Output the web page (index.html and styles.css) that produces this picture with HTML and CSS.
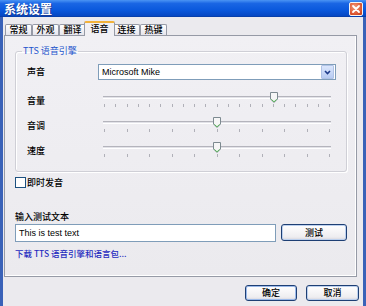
FILE: index.html
```html
<!DOCTYPE html>
<html>
<head>
<meta charset="utf-8">
<link rel="stylesheet" href="styles.css">
</head>
<body>
<div class="window">
  <div class="titlebar">
    <span class="title">系统设置</span>
    <span class="close"><svg width="12" height="12" viewBox="0 0 12 12"><path d="M3 3 L9 9 M9 3 L3 9" stroke="#fff" stroke-width="1.8" stroke-linecap="round"/></svg></span>
  </div>
  <div class="client">
    <div class="tabs">
      <div class="tab">常规</div>
      <div class="tab">外观</div>
      <div class="tab">翻译</div>
      <div class="tab active">语音</div>
      <div class="tab">连接</div>
      <div class="tab">热键</div>
    </div>
    <div class="panel">
      <fieldset class="group">
        <legend>TTS 语音引擎</legend>
        <div class="row row-voice">
          <span class="label">声音</span>
          <div class="combo">
            <span class="combo-text">Microsoft Mike</span>
            <span class="combo-btn"><svg width="7" height="5" viewBox="0 0 7 5"><path d="M1 1 L3.5 3.5 L6 1" fill="none" stroke="#1d3a8a" stroke-width="1.6"/></svg></span>
          </div>
        </div>
        <div class="row">
          <span class="label">音量</span>
          <div class="slider">
            <div class="track"></div>
            <div class="ticks"><i></i><i></i><i></i><i></i><i></i><i></i><i></i><i></i><i></i><i></i><i></i><i></i><i></i><i></i><i></i><i></i><i></i><i></i><i></i><i></i><i></i></div>
            <span class="thumb" style="left: 75%"><svg width="8" height="11" viewBox="0 0 8 11"><path d="M0.5 0.5 H7.5 V7 L4 10.5 L0.5 7 Z" fill="#f6f6f6" stroke="#7d8a90"/><path d="M1.4 7.4 L4 9.8 L6.6 7.4" fill="none" stroke="#55b555"/></svg></span>
          </div>
        </div>
        <div class="row">
          <span class="label">音调</span>
          <div class="slider">
            <div class="track"></div>
            <div class="ticks"><i></i><i></i><i></i><i></i><i></i><i></i><i></i><i></i><i></i><i></i><i></i></div>
            <span class="thumb" style="left: 50%"><svg width="8" height="11" viewBox="0 0 8 11"><path d="M0.5 0.5 H7.5 V7 L4 10.5 L0.5 7 Z" fill="#f6f6f6" stroke="#7d8a90"/><path d="M1.4 7.4 L4 9.8 L6.6 7.4" fill="none" stroke="#55b555"/></svg></span>
          </div>
        </div>
        <div class="row">
          <span class="label">速度</span>
          <div class="slider">
            <div class="track"></div>
            <div class="ticks"><i></i><i></i><i></i><i></i><i></i><i></i><i></i><i></i><i></i><i></i><i></i></div>
            <span class="thumb" style="left: 50%"><svg width="8" height="11" viewBox="0 0 8 11"><path d="M0.5 0.5 H7.5 V7 L4 10.5 L0.5 7 Z" fill="#f6f6f6" stroke="#7d8a90"/><path d="M1.4 7.4 L4 9.8 L6.6 7.4" fill="none" stroke="#55b555"/></svg></span>
          </div>
        </div>
      </fieldset>
      <label class="check"><span class="box"></span>即时发音</label>
      <div class="input-label">输入测试文本</div>
      <div class="input-row">
        <div class="textbox">This is test text</div>
        <div class="btn btn-test">测试</div>
      </div>
      <div class="link">下载 TTS 语音引擎和语言包...</div>
    </div>
    <div class="footer">
      <div class="btn btn-ok">确定</div>
      <div class="btn btn-cancel">取消</div>
    </div>
  </div>
</div>
</body>
</html>
```
FILE: styles.css
```css
html, body {
  margin: 0;
  padding: 0;
  width: 366px;
  height: 306px;
  overflow: hidden;
  background: #ebeaee;
  font-family: "Noto Sans CJK SC", "Liberation Sans", sans-serif;
  font-size: 9px;
  font-weight: 500;
  color: #000;
}
.window {
  width: 366px;
  height: 306px;
  box-sizing: border-box;
  display: flex;
  flex-direction: column;
  border-left: 3px solid #3a62b8;
  border-right: 3px solid #3a62b8;
}
.titlebar {
  height: 17px;
  flex: none;
  margin: 0 -3px;
  padding: 0 3px 0 4px;
  display: flex;
  align-items: center;
  justify-content: space-between;
  background: linear-gradient(to bottom, #4b94f4 0%, #1a66e4 20%, #0a58dc 60%, #0648c4 92%, #083a9c 100%);
}
.title {
  color: #fff;
  font-weight: bold;
  font-size: 12px;
  line-height: 14px;
  text-shadow: 1px 1px 0 #1a3a90;
}
.close {
  width: 12px;
  height: 12px;
  border: 1px solid #f4f4f4;
  border-radius: 2px;
  background: radial-gradient(circle at 40% 35%, #f29a7c, #dc5530 65%, #bb3a16);
  display: flex;
  align-items: center;
  justify-content: center;
}
.close svg { display: block; }
.client {
  flex: 1;
  display: flex;
  flex-direction: column;
  padding: 0 6px 0 1px;
}
.tabs {
  display: flex;
  align-items: flex-end;
  height: 18px;
  padding-left: 1px;
  flex: none;
}
.tab {
  width: 27px;
  height: 11px;
  box-sizing: border-box;
  border: 1px solid #969aa6;
  border-bottom: none;
  border-radius: 2px 2px 0 0;
  background: linear-gradient(to bottom, #ffffff, #e6e5ec);
  font-size: 9px;
  line-height: 10px;
  text-align: center;
  white-space: nowrap;
}
.tab.active {
  width: 31px;
  height: 15px;
  margin: 0 -2px -1px;
  border-top: 2px solid #f2b23a;
  background: #f1f0f4;
  line-height: 12px;
  position: relative;
  z-index: 1;
}
.panel {
  flex: none;
  height: 242px;
  box-sizing: border-box;
  border: 1px solid #969aa6;
  box-shadow: inset -1px -1px 0 #ffffff;
  background: linear-gradient(to bottom, #f1f0f4, #ebeaee);
  padding: 9px 9px 0 10px;
  display: flex;
  flex-direction: column;
}
.group {
  margin: 0;
  padding: 7px 10px 0 11px;
  border: 1px solid #cfcfd6;
  border-radius: 3px;
  height: 127px;
  box-sizing: border-box;
  box-shadow: inset 1px 1px 0 #ffffff, 1px 1px 0 #ffffff;
  flex: none;
}
.group legend {
  color: #2354cc;
  padding: 0 1px;
  margin-left: -5px;
  font-size: 9px;
  font-weight: 400;
  line-height: 12px;
}
.row {
  display: flex;
  align-items: center;
  height: 25px;
}
.row-voice {
  height: 16px;
  margin-bottom: 8px;
}
.label {
  width: 71px;
  flex: none;
  font-size: 9px;
  line-height: 12px;
}
.combo {
  flex: 1;
  height: 16px;
  box-sizing: border-box;
  border: 1px solid #7f9db9;
  background: #fff;
  display: flex;
  align-items: center;
  padding: 0 1px 0 3px;
}
.combo-text {
  flex: 1;
  font-family: "Liberation Sans", sans-serif;
  font-weight: 400;
  font-size: 9px;
}
.combo-btn {
  width: 13px;
  height: 14px;
  box-sizing: border-box;
  border: 1px solid #b0c2e6;
  border-radius: 1px;
  background: linear-gradient(to bottom, #dbe6fc, #b8cbf2);
  display: flex;
  align-items: center;
  justify-content: center;
}
.combo-btn svg { display: block; }
.slider {
  flex: 1;
  align-self: stretch;
  position: relative;
  margin: 0 5px;
}
.track {
  margin-top: 8px;
  height: 1px;
  border-top: 1px solid #b4b4bc;
  border-bottom: 1px solid #ffffff;
  background: #e2e2e8;
}
.ticks {
  display: flex;
  justify-content: space-between;
  margin: 5px 1px 0;
}
.ticks i {
  width: 1px;
  height: 3px;
  background: #b0b0b8;
}
.thumb {
  position: absolute;
  top: 4px;
  transform: translateX(-50%);
  line-height: 0;
}
.check {
  display: flex;
  align-items: center;
  margin-top: 4px;
  height: 12px;
  font-size: 9px;
  flex: none;
}
.box {
  width: 9px;
  height: 9px;
  border: 1px solid #1c5180;
  background: #fff;
  margin-right: 1px;
}
.input-label {
  margin-top: 23px;
  font-size: 9px;
  line-height: 12px;
  height: 12px;
  flex: none;
}
.input-row {
  display: flex;
  align-items: flex-start;
  margin-top: 1px;
  gap: 5px;
  flex: none;
}
.textbox {
  flex: 1;
  height: 18px;
  box-sizing: border-box;
  border: 1px solid #7f9db9;
  background: #fff;
  padding: 0 3px;
  line-height: 16px;
  font-family: "Liberation Sans", sans-serif;
  font-weight: 400;
  font-size: 9px;
}
.btn {
  height: 17px;
  box-sizing: border-box;
  border: 1px solid #1e3f74;
  border-radius: 3px;
  background: linear-gradient(to bottom, #ffffff, #eeedf0 80%, #d6d4dc);
  box-shadow: inset 0 0 0 1px #bcd0ee;
  text-align: center;
  line-height: 15px;
  font-size: 9px;
}
.btn-test { width: 66px; }
.link {
  margin-top: 5px;
  color: #1f2bbf;
  font-size: 8.5px;
  line-height: 12px;
  flex: none;
}
.footer {
  display: flex;
  justify-content: flex-end;
  gap: 9px;
  margin: 8px -2px 0 0;
}
.footer .btn {
  height: 16px;
  line-height: 14px;
}
.btn-ok { width: 52px; box-shadow: inset 0 0 0 1px #9ab9ea; }
.btn-cancel { width: 53px; }
```
